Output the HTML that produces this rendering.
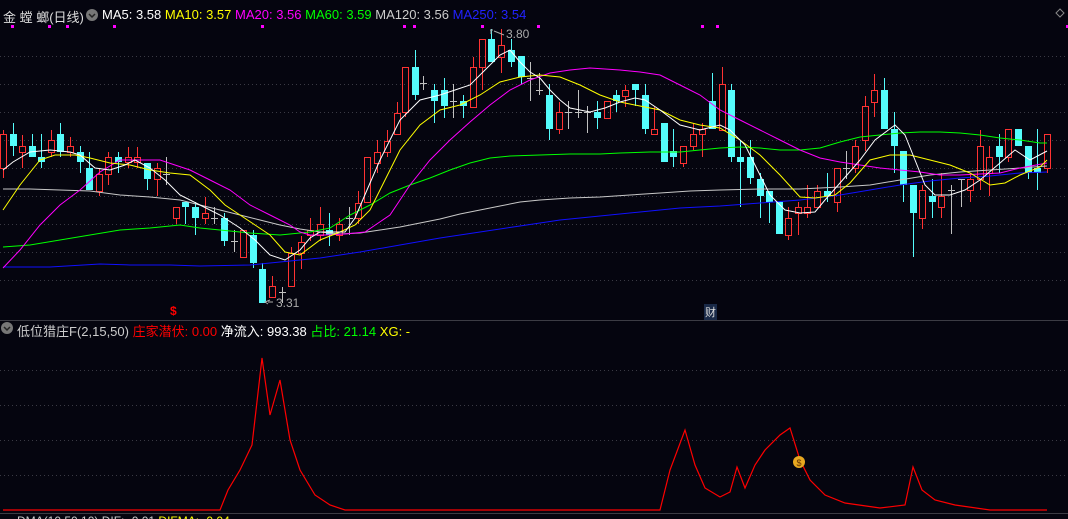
<!DOCTYPE html>
<html><head><meta charset="utf-8"><style>
html,body{margin:0;padding:0;background:#05050f;overflow:hidden}
body{width:1068px;height:519px;position:relative;font-family:"Liberation Sans","Noto Sans CJK SC",sans-serif;font-size:12px}
.t{position:absolute;white-space:nowrap}
svg{position:absolute;left:0;top:0}
</style></head><body>
<svg id="s" width="1068" height="519" xmlns="http://www.w3.org/2000/svg">
<g stroke="#3a3a44" stroke-dasharray="1 3" stroke-width="1">
<line x1="0" y1="56.5" x2="1068" y2="56.5"/><line x1="0" y1="84.5" x2="1068" y2="84.5"/>
<line x1="0" y1="112.5" x2="1068" y2="112.5"/><line x1="0" y1="140.5" x2="1068" y2="140.5"/>
<line x1="0" y1="168.5" x2="1068" y2="168.5"/><line x1="0" y1="196.5" x2="1068" y2="196.5"/>
<line x1="0" y1="224.5" x2="1068" y2="224.5"/><line x1="0" y1="252.5" x2="1068" y2="252.5"/>
<line x1="0" y1="280.5" x2="1068" y2="280.5"/>
<line x1="0" y1="370.5" x2="1068" y2="370.5"/><line x1="0" y1="405.5" x2="1068" y2="405.5"/>
<line x1="0" y1="440.5" x2="1068" y2="440.5"/><line x1="0" y1="475.5" x2="1068" y2="475.5"/>
</g>
<line x1="0" y1="320.5" x2="1068" y2="320.5" stroke="#3c3c44"/>
<line x1="0" y1="513.5" x2="1068" y2="513.5" stroke="#3c3c44"/>
<g id="c"></g>
<g fill="none" stroke-width="1">
<polyline stroke="#c8c8c8" points="3,189 30,189 60,190 90,191 120,195 150,197 180,200 200,205 220,210 240,215 260,220 280,225 300,229 320,232 340,234 360,233 380,230 400,227 420,223 440,219 460,214 480,210 500,206 520,202 540,200 570,198 600,197 630,195 660,193 690,191 720,190 760,189 800,189 840,187 870,185 900,180 930,175 960,172 990,170 1020,168 1047,166"/>
<polyline stroke="#1010ff" points="3,267 50,267 100,264 130,265 170,265 200,266 250,265 280,262 320,258 360,252 400,245 440,238 480,232 520,226 560,220 600,216 640,212 680,208 720,206 760,203 800,200 840,195 870,190 900,185 930,181 960,178 990,176 1020,173 1047,172"/>
<polyline stroke="#00ff00" points="3,247 30,245 60,240 90,235 120,230 150,228 180,225 200,228 220,230 250,233 280,235 310,232 330,228 350,215 370,205 390,193 410,185 430,178 450,170 470,163 490,158 510,156 540,155 570,154 600,154 620,153 650,152 680,152 700,150 720,148 740,147 760,148 780,150 800,150 820,148 840,142 860,137 880,135 900,133 920,132 940,132 960,133 980,135 1000,138 1020,140 1040,143 1047,143"/>
<polyline stroke="#ff00ff" points="3,268 20,250 40,225 60,205 80,190 100,172 120,160 140,160 160,160 175,165 190,170 210,180 230,190 250,205 270,215 290,225 300,232 310,235 325,235 345,234 365,232 390,215 410,185 430,160 450,140 470,122 490,105 510,90 530,80 550,73 570,70 590,68 620,70 640,72 660,75 680,85 700,95 720,110 740,120 760,130 780,140 800,150 820,158 840,162 860,165 880,168 900,170 920,172 940,175 960,175 980,174 1000,173 1020,168 1047,163"/>
<polyline stroke="#ffff00" points="3,210 20,185 40,160 55,155 75,155 90,158 110,163 130,165 150,170 170,173 190,175 210,190 225,205 240,215 255,225 270,235 285,252 300,255 320,240 340,232 355,225 370,210 385,180 400,150 420,125 440,110 460,105 480,95 500,82 520,77 540,75 560,77 580,85 600,95 620,102 640,106 660,110 680,120 700,125 720,128 740,140 760,155 780,175 800,197 815,198 835,195 850,183 870,160 890,155 910,155 930,160 950,165 970,173 990,185 1005,183 1020,175 1040,167 1047,160"/>
<polyline stroke="#ffffff" points="3,170 13,162 30,152 50,150 70,152 80,155 95,168 110,170 125,165 135,160 150,168 165,180 180,195 200,205 220,215 240,228 255,240 270,255 285,260 300,250 310,238 320,232 330,232 345,232 355,218 367,190 380,160 400,120 420,100 440,95 455,90 470,85 485,70 500,55 510,50 520,62 530,72 540,78 550,90 560,100 570,108 590,112 605,108 620,102 635,98 645,100 660,110 680,125 700,130 720,125 730,130 745,145 760,175 770,195 785,210 800,213 815,212 825,200 840,183 860,160 875,140 895,125 905,135 915,160 925,185 935,195 950,195 965,190 980,180 1000,163 1015,150 1030,160 1047,151"/>
<polyline stroke="#ff0000" stroke-width="1.2" points="3,510 220,510 228,490 240,470 252,445 262,358 270,415 280,380 290,440 300,470 315,495 330,505 345,510 660,510 670,470 685,430 695,465 705,488 720,497 730,492 737,467 745,488 755,465 765,450 780,435 790,428 800,460 810,480 825,495 845,503 880,508 905,505 913,467 922,490 935,500 955,505 990,510 1047,510"/>
</g>
<g fill="#ff00ff"><rect x="11" y="25" width="3" height="3"/><rect x="48" y="25" width="3" height="3"/><rect x="66" y="25" width="3" height="3"/><rect x="113" y="25" width="3" height="3"/><rect x="261" y="25" width="3" height="3"/><rect x="403" y="25" width="3" height="3"/><rect x="413" y="25" width="3" height="3"/><rect x="481" y="25" width="3" height="3"/><rect x="537" y="25" width="3" height="3"/><rect x="701" y="25" width="3" height="3"/><rect x="716" y="25" width="3" height="3"/><rect x="1066" y="25" width="3" height="3"/></g>
<path d="M490,30 L493,30 M491,30 L491,34 M494,31 L504,35 M270,300 L265,302 L268,304 M268,302 L273,302" stroke="#aaa" fill="none"/>
<circle cx="799" cy="462" r="6" fill="#e8a820"/><text x="799" y="466" fill="#603000" font-size="9" text-anchor="middle" font-family="Liberation Sans">$</text>
<circle cx="92" cy="15" r="6" fill="#777"/><path d="M89,14 L92,17 L95,14" stroke="#222" stroke-width="1.5" fill="none"/>
<circle cx="7" cy="328" r="6" fill="#777"/><path d="M4,327 L7,330 L10,327" stroke="#222" stroke-width="1.5" fill="none"/>
<path d="M1056,13 L1060,9 L1064,13 L1060,17 Z" stroke="#888" fill="none"/>
</svg>
<div class="t" style="left:3px;top:7px;color:#ddd;font-size:13px">金 螳 螂(日线)</div>
<div class="t" style="left:102px;top:7px;font-size:13px"><span style="color:#fff">MA5: 3.58</span> <span style="color:#ff0">MA10: 3.57</span> <span style="color:#f0f">MA20: 3.56</span> <span style="color:#0f0">MA60: 3.59</span> <span style="color:#ccc">MA120: 3.56</span> <span style="color:#22f">MA250: 3.54</span></div>
<div class="t" style="left:506px;top:27px;color:#aaa;font-size:12px">3.80</div>
<div class="t" style="left:276px;top:296px;color:#aaa;font-size:12px">3.31</div>
<div class="t" style="left:170px;top:304px;color:#f00;font-size:12px;font-weight:bold">$</div>
<div class="t" style="left:704px;top:304px;color:#ddd;font-size:11px;background:#1a2a48;padding:0 1px">财</div>
<div class="t" style="left:17px;top:321px;font-size:13px"><span style="color:#ccc">低位猎庄F(2,15,50)</span> <span style="color:#f00">庄家潜伏: 0.00</span> <span style="color:#fff">净流入: 993.38</span> <span style="color:#0f0">占比: 21.14</span> <span style="color:#ff0">XG: -</span></div>
<div class="t" style="left:17px;top:514px;font-size:12px"><span style="color:#ccc">DMA(10,50,10) DIF: -0.01</span> <span style="color:#ff0">DIFMA: -0.04</span></div>
<script>
var d=[
[3,168,134,130,178],[13,134,146,123,156],[22,152,146,135,168],[32,146,157,134,157],[41,157,162,134,168],[51,152,140,130,157],[60,134,152,123,157],[70,152,146,137,157],[80,152,162,146,173],[89,168,190,152,190],[99,191,174,168,196],[108,174,157,152,185],[118,157,162,152,173],[128,162,157,147,168],[137,162,157,147,168],[147,163,179,163,190],[157,179,168,163,196],[166,174,174,157,185],[176,218,207,207,224],[185,202,207,202,224],[195,207,218,202,235],[205,218,213,197,224],[214,218,218,207,224],[224,218,241,213,246],[234,241,241,230,252],[243,257,230,230,257],[253,235,263,230,268],[262,269,303,263,303],[272,297,286,276,297],[282,292,292,287,303],[291,286,253,247,286],[301,253,242,236,269],[310,235,230,218,241],[320,235,224,207,241],[329,230,235,213,246],[339,235,224,218,241],[349,218,218,207,235],[358,218,203,191,224],
[367,202,157,157,202],[377,163,152,140,173],[387,152,141,130,157],[397,134,113,102,134],[405,112,67,67,117],[415,67,95,50,100],[423,83,83,76,90],[434,90,101,84,123],[444,90,106,78,118],[453,101,101,84,118],[463,101,106,95,118],[473,107,67,57,107],[482,67,39,39,90],[491,39,62,29,62],[501,57,45,29,73],[511,50,62,39,67],[521,56,77,56,84],[530,78,78,62,101],[539,90,90,73,95],[549,95,129,84,140],[559,129,112,102,134],[568,112,112,101,129],[578,112,112,90,118],[587,112,112,106,133],[597,112,118,101,129],[607,118,101,101,118],[616,95,101,90,112],[625,96,90,85,107],[635,84,90,84,106],[645,95,129,84,134],[654,134,129,107,134],[664,123,162,123,162],[673,151,157,129,167],[683,163,146,146,167],[693,146,134,123,150],[702,134,129,123,157],[712,101,129,73,129],
[722,130,84,67,130],[731,90,157,84,162],[740,157,162,140,207],[750,157,178,140,184],[760,179,196,173,218],[769,191,202,191,223],[779,202,234,202,234],[788,235,218,207,240],[798,213,207,202,235],[807,213,207,185,218],[817,207,191,185,207],[827,191,196,173,202],[837,202,168,168,212],[846,168,168,151,179],[855,168,146,140,173],[865,140,106,96,151],[874,102,90,74,117],[884,90,129,78,129],[894,129,146,112,173],[903,151,185,151,202],[913,185,213,185,257],[922,218,190,185,229],[932,196,202,179,218],[941,207,196,173,218],[951,190,190,185,234],[961,179,179,179,207],[970,190,179,173,202],[980,179,146,130,190],[989,173,157,146,196],[999,146,157,134,173],[1008,157,129,129,162],[1018,129,146,129,146],[1028,146,173,146,179],[1037,168,173,129,190],[1047,168,134,134,173]];
var g=document.getElementById('c'),h='';
d.forEach(function(a){var x=a[0],o=a[1],c=a[2],hi=a[3],lo=a[4];
if(Math.abs(o-c)<1){h+='<line x1="'+(x+.5)+'" y1="'+hi+'" x2="'+(x+.5)+'" y2="'+lo+'" stroke="#c0c0c0"/><line x1="'+(x-3)+'" y1="'+(o+.5)+'" x2="'+(x+4)+'" y2="'+(o+.5)+'" stroke="#c0c0c0"/>';return;}
if(c<o){h+='<line x1="'+(x+.5)+'" y1="'+hi+'" x2="'+(x+.5)+'" y2="'+c+'" stroke="#ff3232"/><line x1="'+(x+.5)+'" y1="'+o+'" x2="'+(x+.5)+'" y2="'+lo+'" stroke="#ff3232"/><rect x="'+(x-2.5)+'" y="'+(c+.5)+'" width="6" height="'+(o-c)+'" fill="none" stroke="#ff3232"/>';}
else{h+='<line x1="'+(x+.5)+'" y1="'+hi+'" x2="'+(x+.5)+'" y2="'+lo+'" stroke="#54fcfc"/><rect x="'+(x-3)+'" y="'+o+'" width="7" height="'+Math.max(c-o,2)+'" fill="#54fcfc"/>';}
});
g.innerHTML=h;
</script>
</body></html>
